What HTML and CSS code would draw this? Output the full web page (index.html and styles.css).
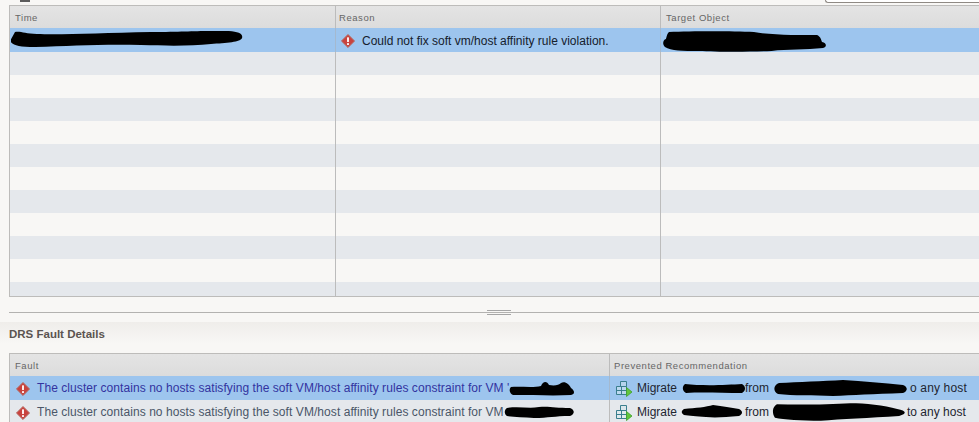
FILE: index.html
```html
<!DOCTYPE html>
<html lang="en">
<head>
<meta charset="utf-8">
<title>DRS Faults</title>
<link rel="stylesheet" href="styles.css">
</head>
<body>
<svg width="0" height="0" class="defs">
  <defs>
    <symbol id="err" viewBox="0 0 14 14">
      <path d="M7 .4 13.600 7 7 13.600.4 7Z" fill="#c9433e" stroke="#b27069" stroke-width=".9" stroke-linejoin="round"/>
      <rect x="6" y="3.200" width="2" height="4.800" rx=".5" fill="#fbeeee"/>
      <rect x="6" y="9" width="2" height="1.900" rx=".5" fill="#fbeeee"/>
    </symbol>
    <symbol id="mig" viewBox="0 0 18 16">
      <path d="M5.500.5h6v5h-6z" fill="#cfe3ea" fill-opacity=".5" stroke="#3b7f8e"/>
      <path d="M1.500 5.500h10v8h-10zM1.500 9.500h10M6.500 5.500v8" fill="#dcebf0" fill-opacity=".5" stroke="#3b7f8e"/>
      <path d="M11.500 6.500v9l5.500-4.500Z" fill="#62c63c" stroke="#3f9f2c" stroke-width=".8" stroke-linejoin="round"/>
    </symbol>
  </defs>
</svg>
<div class="topstrip">
  <span class="tabmark"></span>
  <span class="searchbox"></span>
</div>
<section class="grid events">
  <div class="row head">
    <div class="cell">Time</div>
    <div class="cell col-reason">Reason</div>
    <div class="cell">Target Object</div>
  </div>
  <div class="row selected">
    <div class="cell"><svg class="blot blot-time" viewBox="0 0 232 17" width="232" height="17"><path d="M4 1C10 0 14 3 26 3 50 4 90 2 140 1 170 1 180 0 200 0 222 -1 233 1 231 7 230 11 215 12 200 13 180 15 160 15 130 14 90 13 60 15 24 16 8 16 2 14-1 10 0 3 4 1Z" fill="#000"/></svg></div>
    <div class="cell col-reason"><svg class="ico"><use href="#err"/></svg><span class="msg">Could not fix soft vm/host affinity rule violation.</span></div>
    <div class="cell"><svg class="blot blot-target" viewBox="0 0 165 21" width="163" height="21"><path d="M6 1C30 0 70 0 92 1 110 4 140 4 156 4 160 6 160 9 161 11 166 12 166 16 162 17 145 19 125 18 110 20 90 21 55 21 36 20 20 20 8 20 2 16-1 13 0 9 3 8 4 5 4 3 6 1Z" fill="#000"/></svg></div>
  </div>
  <div class="row stripe"><div class="cell"></div><div class="cell"></div><div class="cell"></div></div>
  <div class="row"><div class="cell"></div><div class="cell"></div><div class="cell"></div></div>
  <div class="row stripe"><div class="cell"></div><div class="cell"></div><div class="cell"></div></div>
  <div class="row"><div class="cell"></div><div class="cell"></div><div class="cell"></div></div>
  <div class="row stripe"><div class="cell"></div><div class="cell"></div><div class="cell"></div></div>
  <div class="row"><div class="cell"></div><div class="cell"></div><div class="cell"></div></div>
  <div class="row stripe"><div class="cell"></div><div class="cell"></div><div class="cell"></div></div>
  <div class="row"><div class="cell"></div><div class="cell"></div><div class="cell"></div></div>
  <div class="row stripe"><div class="cell"></div><div class="cell"></div><div class="cell"></div></div>
  <div class="row"><div class="cell"></div><div class="cell"></div><div class="cell"></div></div>
  <div class="row stripe partial"><div class="cell"></div><div class="cell"></div><div class="cell"></div></div>
</section>
<div class="splitter"><span class="grip"></span></div>
<h2 class="title">DRS Fault Details</h2>
<section class="grid faults">
  <div class="row head">
    <div class="cell">Fault</div>
    <div class="cell col-rec">Prevented Recommendation</div>
  </div>
  <div class="row selected">
    <div class="cell"><svg class="ico err-low"><use href="#err"/></svg><span class="fault link">The cluster contains no hosts satisfying the soft VM/host affinity rules constraint for VM '</span><svg class="blot" viewBox="0 0 66 15" width="66" height="15"><path d="M2 6C10 5 24 7 32 5 34 0 38 0 40 4 46 5 50 4 52 2 56 0 60 3 62 7 66 10 66 13 62 14 45 15 25 14 4 14 0 12 0 8 2 6Z" fill="#000"/></svg></div>
    <div class="cell col-rec"><svg class="mig"><use href="#mig"/></svg><span class="rec">Migrate</span><svg class="blot b-vm" viewBox="0 0 64 11" width="64" height="11"><path d="M3 1C20 3 45 2 60 1 64 3 64 8 60 10 40 10 20 9 4 10 0 8 0 3 3 1Z" fill="#000"/></svg><span class="rec">from</span><svg class="blot b-from" viewBox="0 0 134 16" width="134" height="16"><path d="M6 3C25 2 50 1 70 0 90 1 110 3 130 5 135 7 135 11 130 13 100 14 80 15 60 16 40 15 20 16 5 14 0 12 0 5 6 3Z" fill="#000"/></svg><span class="rec tail">o any host</span></div>
  </div>
  <div class="row stripe">
    <div class="cell"><svg class="ico err-low"><use href="#err"/></svg><span class="fault">The cluster contains no hosts satisfying the soft VM/host affinity rules constraint for VM</span><svg class="blot" viewBox="0 0 70 12" width="70" height="12"><path d="M3 2C15 0 25 3 35 1 45 0 52 2 66 2 71 4 71 8 66 10 50 10 45 12 30 12 20 11 10 11 3 10 0 8 0 4 3 2Z" fill="#000"/></svg></div>
    <div class="cell col-rec"><svg class="mig"><use href="#mig"/></svg><span class="rec">Migrate</span><svg class="blot b-vm2" viewBox="0 0 62 13" width="62" height="13"><path d="M3 4C15 3 25 2 32 0 42 1 50 3 58 4 62 6 62 9 58 11 45 12 35 13 25 12 15 11 8 11 3 10 0 8 0 6 3 4Z" fill="#000"/></svg><span class="rec">from</span><svg class="blot b-from2" viewBox="0 0 138 18" width="135" height="18"><path d="M5 1C30 2 60 1 80 0 95 0 115 2 128 6 138 8 138 11 130 13 100 15 70 16 50 18 30 18 12 17 3 15 0 10 0 4 5 1Z" fill="#000"/></svg><span class="rec">to any host</span></div>
  </div>
</section>
</body>
</html>
```
FILE: styles.css
```css
* { box-sizing: border-box; }
html, body { margin: 0; padding: 0; }
body {
  width: 979px;
  height: 422px;
  overflow: hidden;
  background: #f8f7f5;
  font-family: "Liberation Sans", Arial, sans-serif;
  color: #222;
}
.defs { position: absolute; }
.topstrip {
  height: 5px;
  display: flex;
  justify-content: space-between;
  align-items: flex-start;
  padding-left: 20px;
}
.tabmark {
  width: 10px;
  height: 2px;
  background: #5c5c5c;
}
.searchbox {
  width: 154px;
  height: 3px;
  border: 1px solid #8f8a84;
  border-top: 0;
  border-right: 0;
  border-bottom-left-radius: 4px;
  background: #fff;
}
.grid {
  margin-left: 9px;
  border: 1px solid #bdbcba;
  border-right: 0;
  overflow: hidden;
}
.events { height: 292px; }
.faults { height: 70px; border-bottom: 0; }
.row {
  display: grid;
  grid-template-columns: 326px 325px 1fr;
  height: 23px;
  background: #f8f7f5;
}
.faults .row { grid-template-columns: 600px 1fr; }
.cell {
  display: flex;
  align-items: center;
  min-width: 0;
  white-space: nowrap;
  border-right: 1px solid #bcbcbc;
  font-size: 12px;
  padding-left: 5px;
}
.cell:last-child { border-right: 0; }
.head {
  height: 22px;
  background: linear-gradient(#e4e4e4, #dcdcdc);
}
.head .cell {
  font-size: 9.5px;
  letter-spacing: .55px;
  color: #666;
}
.head .col-reason { padding-left: 3px; }
.head .col-rec { padding-left: 4px; }
.selected { background: #9dc5ee; height: 24px; }
.selected .cell { border-right-color: #a4b9cf; }
.events .selected .cell { padding-top: 1px; }
.stripe { background: #e5e8ec; }
.ico {
  flex: none;
  width: 14px;
  height: 14px;
  margin-left: 1px;
  margin-right: 7px;
}
.col-reason .ico { margin-left: 0; }
.err-low { margin-top: 2px; }
.mig {
  flex: none;
  width: 18px;
  height: 16px;
  margin-right: 4px;
  margin-top: 2px;
}
.msg { color: #15202c; }
.fault { color: #4a5668; letter-spacing: .067px; }
.fault.link { color: #3333a0; }
.rec { color: #1d2530; }
.tail { letter-spacing: .15px; }
.blot { flex: none; display: block; }
.blot-time { margin-left: -4px; margin-top: -3px; }
.blot-target { margin-left: -3px; margin-top: 1px; }
.b-vm { margin: 0 -1px 0 5px; }
.b-vm2 { margin: 0 2px 0 4px; }
.b-from { margin: 0 3px 0 4px; }
.b-from2 { margin: 0 0 0 3px; }
.splitter {
  position: relative;
  height: 25px;
  margin-left: 9px;
}
.splitter::after {
  content: "";
  display: block;
  height: 1px;
  position: relative;
  top: 15px;
  background: #b3b2b0;
}
.grip {
  position: absolute;
  left: 478px;
  top: 13px;
  width: 24px;
  height: 5px;
  border-top: 1px solid #a5a5a5;
  border-bottom: 1px solid #a5a5a5;
}
.title {
  margin: 0;
  height: 31px;
  padding: 5px 0 0 9px;
  font-size: 11.5px;
  line-height: 14px;
  font-weight: 700;
  color: #5b5450;
  background: linear-gradient(#efedea, #f8f7f5 70%);
}
```
